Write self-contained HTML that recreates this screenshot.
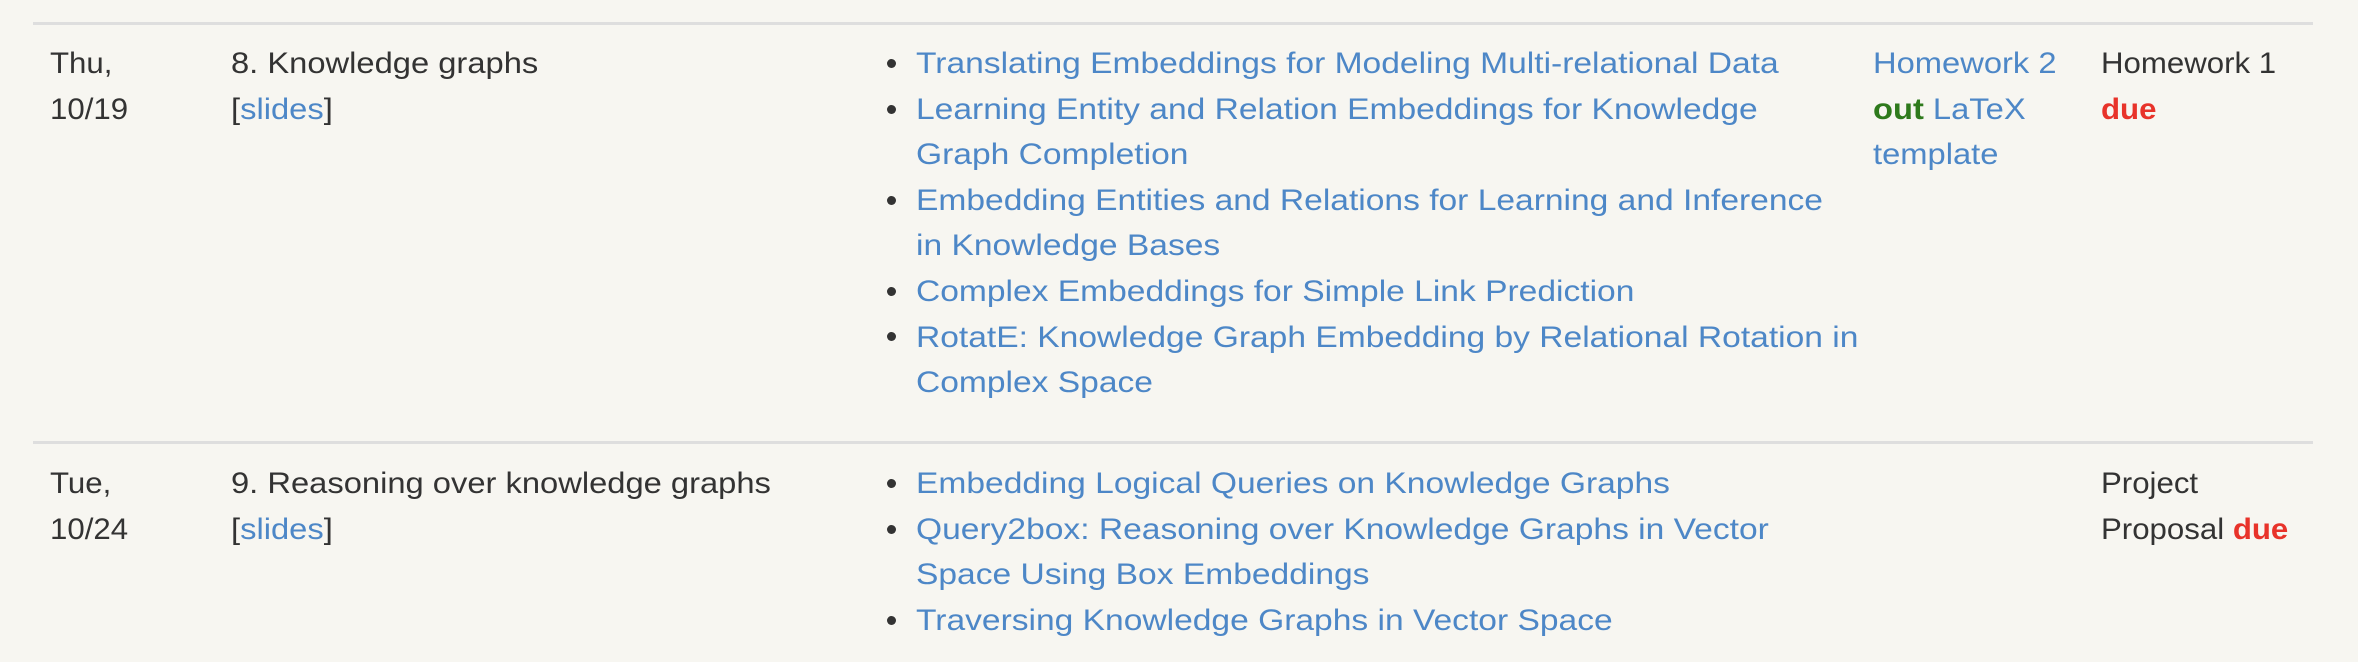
<!DOCTYPE html>
<html><head><meta charset="utf-8"><style>
html,body{margin:0;padding:0;background:#f7f6f1;width:2358px;height:662px;overflow:hidden}
body{font-family:"Liberation Sans",sans-serif;font-size:30px;color:#333;position:relative}
.a{position:absolute;line-height:45.6px;white-space:nowrap;transform-origin:0 0}
.l{color:#4d87c7}
.hr{position:absolute;left:33px;width:2280px;height:3px;background:#dedede}
.dot{position:absolute;width:9px;height:9px;border-radius:50%;background:#333;left:887px}
.g{color:#2e7a1c;font-weight:bold}
.r{color:#e8332a;font-weight:bold}
.rd{transform:scaleX(1.119)}
.tp{transform:scaleX(1.09)}
.hw{transform:scaleX(1.09)}
.du{transform:scaleX(1.04)}
.dt{transform:scaleX(1.04)}
</style></head><body>
<div class="hr" style="top:22px"></div>
<div class="hr" style="top:441px"></div>

<div class="a dt" style="left:50px;top:41px">Thu,<br>10/19</div>
<div class="a tp" style="left:231px;top:41px">8. Knowledge graphs<br>[<span class="l">slides</span>]</div>
<div class="dot" style="top:59px"></div>
<div class="dot" style="top:105px"></div>
<div class="dot" style="top:196px"></div>
<div class="dot" style="top:287px"></div>
<div class="dot" style="top:332px"></div>
<div class="a l rd" style="left:916px;top:41px">Translating Embeddings for Modeling Multi-relational Data<br>Learning Entity and Relation Embeddings for Knowledge<br>Graph Completion<br>Embedding Entities and Relations for Learning and Inference<br>in Knowledge Bases<br>Complex Embeddings for Simple Link Prediction<br>RotatE: Knowledge Graph Embedding by Relational Rotation in<br>Complex Space</div>
<div class="a hw" style="left:1873px;top:41px"><span class="l">Homework 2</span><br><span class="g">out</span> <span class="l">LaTeX</span><br><span class="l">template</span></div>
<div class="a du" style="left:2101px;top:41px">Homework 1<br><span class="r">due</span></div>

<div class="a dt" style="left:50px;top:461px">Tue,<br>10/24</div>
<div class="a tp" style="left:231px;top:461px">9. Reasoning over knowledge graphs<br>[<span class="l">slides</span>]</div>
<div class="dot" style="top:479px"></div>
<div class="dot" style="top:525px"></div>
<div class="dot" style="top:616px"></div>
<div class="a l rd" style="left:916px;top:461px">Embedding Logical Queries on Knowledge Graphs<br>Query2box: Reasoning over Knowledge Graphs in Vector<br>Space Using Box Embeddings<br>Traversing Knowledge Graphs in Vector Space</div>
<div class="a du" style="left:2101px;top:461px">Project<br>Proposal <span class="r">due</span></div>
</body></html>
